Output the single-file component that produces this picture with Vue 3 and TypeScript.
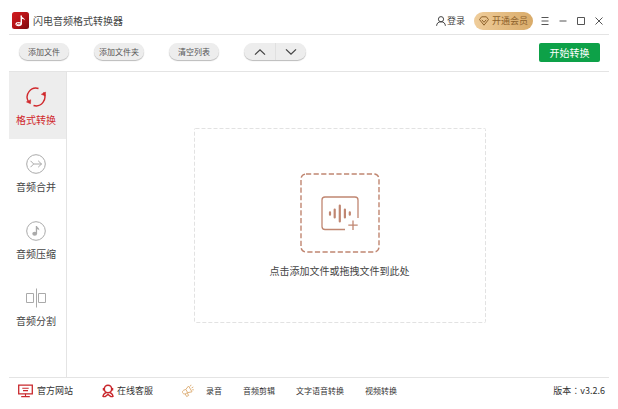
<script setup lang="ts">
import { ref } from 'vue'

interface Tool {
  id: string
  label: string
}

const tools: Tool[] = [
  { id: 'convert', label: '格式转换' },
  { id: 'merge', label: '音频合并' },
  { id: 'compress', label: '音频压缩' },
  { id: 'split', label: '音频分割' },
]
const active = ref<string>('convert')
const fileActions: string[] = ['添加文件', '添加文件夹', '清空列表']
const moreLinks: string[] = ['录音', '音频剪辑', '文字语音转换', '视频转换']
</script>

<template>
  <div class="window">
    <header class="titlebar">
      <svg class="logo" viewBox="0 0 17 17" aria-hidden="true">
        <defs>
          <linearGradient id="logoFill" x1="0" y1="0" x2="1" y2="1">
            <stop offset="0" stop-color="#d21c20" />
            <stop offset="0.55" stop-color="#b01217" />
            <stop offset="1" stop-color="#78090d" />
          </linearGradient>
        </defs>
        <rect width="17" height="17" rx="2.5" fill="url(#logoFill)" />
        <path d="M8.6 3.2c.5 1.8 3.8 2.3 4.6 5.2-1.1-1.1-2.3-1.3-3.2-1.3v5" fill="#fff" />
        <path d="M9.3 3.6v8.6" stroke="#fff" stroke-width="1.4" />
        <ellipse cx="6.6" cy="12.1" rx="3.2" ry="2.1" fill="#fff" />
        <path d="M4.6 12.5l1.5-1.3.6 1 1.5-.8" stroke="#b51218" stroke-width=".9" fill="none" />
      </svg>
      <h1>闪电音频格式转换器</h1>
      <button class="login" type="button">
        <svg width="10" height="10" viewBox="0 0 10 10" aria-hidden="true">
          <circle cx="5" cy="3.2" r="2.6" />
          <path d="M.6 9.8C.8 7.2 2.3 5.8 5 5.8s4.2 1.4 4.4 4" />
        </svg>
        登录
      </button>
      <button class="vip" type="button">
        <svg width="10" height="10" viewBox="0 0 10 10" aria-hidden="true">
          <path d="M2.6 .8h4.8L9.5 3.6 5 9.2.5 3.6z" />
          <path d="M2.8 3.8L5 6.3l2.2-2.5" />
        </svg>
        开通会员
      </button>
      <div class="controls">
        <button type="button" aria-label="菜单">
          <svg viewBox="0 0 8 8"><path d="M.5 .5h7M.5 4h7M.5 7.5h7" /></svg>
        </button>
        <button type="button" aria-label="最小化">
          <svg viewBox="0 0 8 8"><path d="M.5 4h7" /></svg>
        </button>
        <button type="button" aria-label="最大化">
          <svg viewBox="0 0 8 8"><path d="M.5 .5h7v7h-7z" /></svg>
        </button>
        <button type="button" aria-label="关闭">
          <svg viewBox="0 0 8 8"><path d="M.5 .5l7 7M7.5 .5l-7 7" /></svg>
        </button>
      </div>
    </header>

    <div class="toolbar">
      <button v-for="a in fileActions" :key="a" class="pill" type="button">{{ a }}</button>
      <div class="order">
        <button type="button" aria-label="上移">
          <svg width="12" height="8" viewBox="0 0 12 8"><path d="M1 6.6l5-4.8 5 4.8" /></svg>
        </button>
        <button type="button" aria-label="下移">
          <svg width="12" height="8" viewBox="0 0 12 8"><path d="M1 1.4l5 4.8 5-4.8" /></svg>
        </button>
      </div>
      <button class="start" type="button">开始转换</button>
    </div>

    <div class="body">
      <nav class="side">
        <button
          v-for="t in tools"
          :key="t.id"
          type="button"
          :class="['tool', { active: t.id === active }]"
          @click="active = t.id"
        >
          <svg width="22" height="22" viewBox="0 0 22 22" aria-hidden="true">
            <g v-if="t.id === 'convert'">
              <path d="M3.4 15.6A8.9 8.9 0 0 1 13.5 2.5M8.5 19.5A8.9 8.9 0 0 0 18.6 6.4" stroke-width="1.4" />
              <path d="M1.4 15.9l4.3-2.2-.2 4zM20.6 6.1l-4.3 2.2 4 1.6z" fill="currentColor" stroke-width=".5" />
            </g>
            <g v-else-if="t.id === 'merge'">
              <circle cx="11" cy="11" r="9.3" />
              <path d="M5.5 7.8L8.7 11l-3.2 3.2M8.7 11h8M13.2 7.8l3.3 3.2-3.3 3.2" />
            </g>
            <g v-else-if="t.id === 'compress'">
              <circle cx="11" cy="11" r="9.3" />
              <ellipse cx="9.7" cy="13.7" rx="2.4" ry="2" fill="currentColor" stroke="none" />
              <path d="M10.8 6h1.2c.2 1.5 2.6 1.8 2.3 4.6-.6-1-1.3-1.2-2.2-1.3v4.4h-1.3z" fill="currentColor" stroke="none" />
            </g>
            <g v-else>
              <path d="M11.5 1.5v19M1.5 6.5h7v9h-7zM13.5 6.5h7v9h-7z" />
            </g>
          </svg>
          <span>{{ t.label }}</span>
        </button>
      </nav>

      <main class="stage">
        <button class="drop" type="button">
          <svg class="frame" width="292" height="195" aria-hidden="true">
            <rect x=".5" y=".5" width="291" height="194" rx="1" />
          </svg>
          <svg class="add" width="80" height="80" viewBox="0 0 80 80" aria-hidden="true">
            <rect x="1" y="1" width="78" height="78" rx="5" stroke-width="1.4" stroke-dasharray="5.2 2.4" />
            <path d="M45 56.5H25a3 3 0 0 1-3-3V27a3 3 0 0 1 3-3h30a3 3 0 0 1 3 3v18" stroke-width="1.3" />
            <path d="M53 47.5v9.4M48.3 52.2h9.4" stroke-width="1.3" />
            <g stroke-linecap="round" stroke-width="2.2">
              <path d="M30 39.3v2.4M34.7 36.6v7.8M39.8 32.5v16M44.9 36.6v7.8M49.8 39.3v2.4" />
            </g>
          </svg>
          <span>点击添加文件或拖拽文件到此处</span>
        </button>
      </main>
    </div>

    <footer class="foot">
      <a class="site" href="#">
        <svg width="15" height="14" viewBox="0 0 15 14" aria-hidden="true">
          <path d="M.7 1.2h13.6v8.6H.7z" stroke-width="1.3" />
          <path d="M4.3 4.2h6.4M5 6.6h5M7.5 9.8v2.4M3.2 12.6h8.6" stroke-width="1.1" />
        </svg>
        官方网站
      </a>
      <a class="service" href="#">
        <svg width="12" height="14" viewBox="0 0 12 14" aria-hidden="true">
          <circle cx="6" cy="5" r="3.7" stroke-width="1.5" />
          <path d="M1.6 4v2.6M10.4 4v2.6" stroke-width="1.7" />
          <path d="M1 13c0-2.5 1.2-3.6 3-4.3M11 13c0-2.5-1.2-3.6-3-4.3M1 12.6h2.2L6 10.4l2.8 2.2H11" stroke-width="1.4" />
        </svg>
        在线客服
      </a>
      <div class="more">
        <svg width="12" height="14" viewBox="0 0 12 14" aria-hidden="true">
          <path d="M1.4 6.4l2.4-1L6.6 2l3.4 5.8-4.6.9-2.2 1.2C.6 10.4-.4 7.6 1.4 6.4zM3.8 5.4l1.9 3.2M3.2 9.9l1.4 2.6 2-1-1.3-2.7" />
          <path d="M8.4 2.3L9 .8M9.6 3.9l1.7-.9M10.2 5.8h1.6" />
        </svg>
        <a v-for="l in moreLinks" :key="l" href="#">{{ l }}</a>
      </div>
      <span class="version">版本：v3.2.6</span>
    </footer>
  </div>
</template>

<style>
body {
  margin: 0;
  background: #fff;
}
</style>

<style scoped>
.window {
  box-sizing: border-box;
  display: flex;
  flex-direction: column;
  min-height: 100vh;
  padding: 7px 9px 0;
  font-family: "Noto Sans", "Noto Sans CJK SC", sans-serif;
  font-size: 10px;
  line-height: 14px;
  color: #444;
}
button {
  margin: 0;
  padding: 0;
  border: 0;
  background: none;
  font: inherit;
  color: inherit;
  white-space: nowrap;
  cursor: pointer;
}
a {
  color: inherit;
  text-decoration: none;
  white-space: nowrap;
}
svg {
  display: block;
  flex: none;
  fill: none;
  stroke: currentColor;
}
.titlebar {
  display: flex;
  align-items: center;
  height: 27px;
  padding: 0 6px 0 3px;
  border-bottom: 1px solid #e4e4e4;
}
.logo {
  width: 17px;
  height: 17px;
  stroke: none;
}
h1 {
  flex: 1;
  margin: 0 0 0 4px;
  font-size: 10px;
  font-weight: 400;
}
.login {
  display: flex;
  align-items: center;
  gap: 1px;
  font-size: 9px;
}
.vip {
  display: flex;
  align-items: center;
  justify-content: center;
  gap: 3px;
  width: 59px;
  height: 18px;
  margin: 0 8px 0 9px;
  border-radius: 9px;
  background: linear-gradient(90deg, #efcd9b, #d9ab69);
  font-size: 9px;
  color: #8d612b;
}
.controls {
  display: flex;
  gap: 10px;
}
.controls svg {
  width: 8px;
  height: 8px;
  stroke: #555;
}
.toolbar {
  display: flex;
  align-items: flex-start;
  height: 28px;
  padding: 8px 9px 0 10px;
  border-bottom: 1px solid #e4e4e4;
}
.pill {
  width: 50px;
  height: 17px;
  margin-right: 25px;
  border-radius: 9px;
  background: #ededed;
  box-shadow: 0 1px 1px #bbb;
  font-size: 8px;
  color: #555;
}
.order {
  display: flex;
  height: 17px;
  border-radius: 9px;
  background: #ededed;
  box-shadow: 0 1px 1px #bbb;
}
.order button {
  display: flex;
  align-items: center;
  justify-content: center;
  width: 31px;
}
.order button + button {
  border-left: 1px solid #e0e0e0;
}
.order svg {
  stroke: #444;
  stroke-width: 1.3;
}
.start {
  width: 61px;
  height: 19px;
  margin-left: auto;
  border-radius: 2px;
  background: #0da148;
  color: #fff;
}
.body {
  display: flex;
  flex: 1;
}
.side {
  width: 57px;
  border-right: 1px solid #e4e4e4;
}
.tool {
  display: flex;
  flex-direction: column;
  align-items: center;
  gap: 5px;
  box-sizing: border-box;
  width: 100%;
  height: 67px;
  padding: 14px 3px 0 0;
}
.tool svg {
  color: #aaa;
}
.tool.active {
  background: #ededed;
  color: #d0282c;
}
.tool.active svg {
  color: #d0282c;
}
.stage {
  display: flex;
  flex: 1;
  align-items: center;
  justify-content: center;
  padding: 1px 0 0 3px;
}
.drop {
  position: relative;
  display: flex;
  flex-direction: column;
  align-items: center;
  gap: 11px;
  box-sizing: border-box;
  width: 292px;
  height: 195px;
  padding-top: 45px;
}
.frame {
  position: absolute;
  inset: 0;
  stroke: #e2e2e2;
  stroke-dasharray: 4 2;
}
.add {
  color: #c08671;
}
.foot {
  display: flex;
  align-items: center;
  height: 25px;
  padding: 0 4px 6px 9px;
  border-top: 1px solid #e4e4e4;
  font-size: 9px;
  color: #333;
}
.foot a {
  display: flex;
  align-items: center;
}
.foot .site {
  gap: 4px;
  margin-right: 29px;
}
.foot .service {
  gap: 3px;
  margin-right: 29px;
}
.site svg,
.service svg {
  color: #c9282d;
}
.more {
  display: flex;
  align-items: center;
  gap: 21px;
  font-size: 8px;
}
.more svg {
  margin-right: -9px;
  color: #dfb27c;
}
.version {
  margin-left: auto;
  font-family: "Noto Sans CJK TC", "Noto Sans CJK SC", sans-serif;
}
</style>
